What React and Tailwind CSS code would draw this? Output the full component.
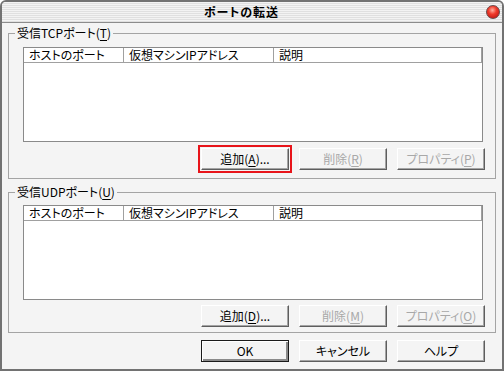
import React from 'react';

const columns = [
  { label: 'ホストのポート', width: 'w-[100px]' },
  { label: '仮想マシンIPアドレス', width: 'w-[150px]' },
  { label: '説明', width: 'w-[208px]' },
];

const Key = ({ children }) => <span className="underline underline-offset-[2px]">{children}</span>;

const Button = ({ children, disabled, isDefault, highlight }) => (
  <button
    type="button"
    className={`w-[88px] h-[22px] flex items-center justify-center bg-[#f4f4f4] border ${
      isDefault
        ? 'border-[#1a1a1a] shadow-[inset_1px_1px_0_#ffffff,inset_-2px_-2px_0_#8a8a8a]'
        : 'border-t-white border-l-white border-r-[#5e5e5e] border-b-[#5e5e5e] shadow-[inset_-1px_-1px_0_#a4a4a4]'
    } ${disabled ? 'text-[#a8a8a8]' : 'text-black'} ${
      highlight ? 'outline-2 outline-[#e8141a] outline-offset-[1px]' : ''
    }`}
  >
    {children}
  </button>
);

const ListView = () => (
  <div className="h-[95px] bg-white border border-[#8a8a8a] mr-[2px]">
    <div className="flex h-[15px]">
      {columns.map(col => (
        <div
          key={col.label}
          className={`${col.width} h-[15px] pl-[5px] flex items-center border-r border-b border-[#a0a0a0] whitespace-nowrap`}
        >
          {col.label}
        </div>
      ))}
    </div>
  </div>
);

const GroupBox = ({ title, mnemonic, buttons, className, padTop, padBottom, btnTop }) => (
  <fieldset className={`border border-[#a4a4a4] p-0 m-0 ${className}`}>
    <legend className="ml-[6px] px-[2px] leading-[14px]">
      {title}(<Key>{mnemonic}</Key>)
    </legend>
    <div className={`pl-[14px] pr-[10px] ${padTop} ${padBottom}`}>
      <ListView />
      <div className={`flex justify-end gap-[10px] ${btnTop}`}>
        {buttons}
      </div>
    </div>
  </fieldset>
);

export default function App() {
  return (
    <div className="w-[504px] h-[371px] flex flex-col bg-[#f4f4f4] border-2 border-[#727272] rounded-t-[6px] overflow-hidden text-[12px] leading-[14px] text-black [font-family:'Noto_Sans_CJK_JP',sans-serif] [font-feature-settings:'palt']">
      <div className="h-[21px] flex items-center border-b border-[#8c8c8c] bg-[repeating-linear-gradient(to_bottom,#f3f3f3_0px,#f3f3f3_1px,#e0e0e0_1px,#e0e0e0_2px)]">
        <div className="flex-1 text-center font-bold tracking-[1px]">ポートの転送</div>
        <div className="ml-[5px] mr-[2px] w-[14px] h-[14px] rounded-full border border-[#6a4a4a] bg-[radial-gradient(circle_at_45%_35%,#ffb0a0_0%,#f03a2a_40%,#b00c0c_100%)]" />
      </div>

      <div className="flex-1 flex flex-col px-[6px]">
        <GroupBox
          className="mt-[3px]"
          title="受信TCPポート"
          mnemonic="T"
          padTop="pt-[7px]"
          padBottom="pb-[8px]"
          btnTop="mt-[6px]"
          buttons={
            <>
              <Button highlight>追加(<Key>A</Key>)...</Button>
              <Button disabled>削除(<Key>R</Key>)</Button>
              <Button disabled>プロパティ(<Key>P</Key>)</Button>
            </>
          }
        />
        <GroupBox
          className="mt-[6px]"
          title="受信UDPポート"
          mnemonic="U"
          padTop="pt-[6px]"
          padBottom="pb-[5px]"
          btnTop="mt-[5px]"
          buttons={
            <>
              <Button>追加(<Key>D</Key>)...</Button>
              <Button disabled>削除(<Key>M</Key>)</Button>
              <Button disabled>プロパティ(<Key>O</Key>)</Button>
            </>
          }
        />
        <div className="flex justify-end gap-[10px] mt-[7px] mr-[11px]">
          <Button isDefault>OK</Button>
          <Button>キャンセル</Button>
          <Button>ヘルプ</Button>
        </div>
      </div>
    </div>
  );
}
